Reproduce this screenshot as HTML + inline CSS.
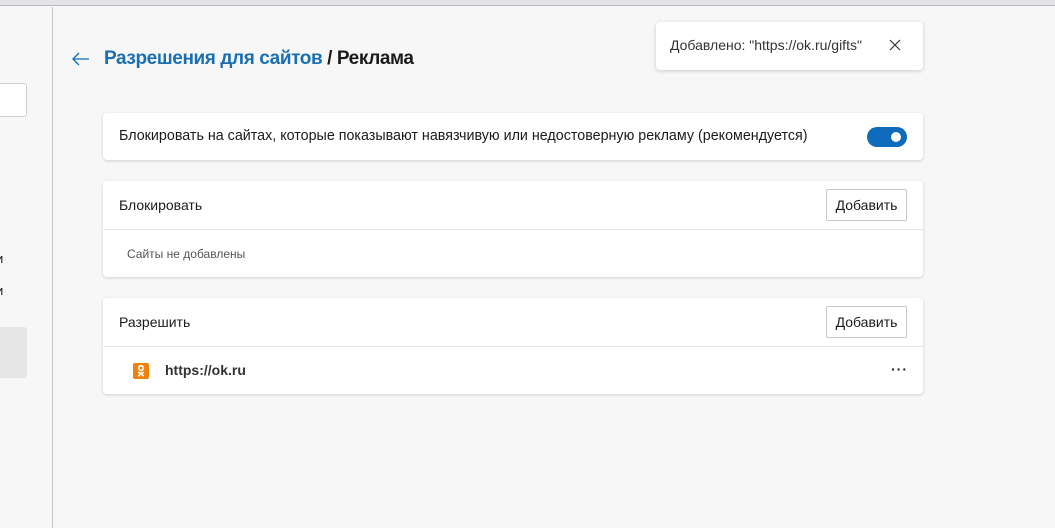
<!DOCTYPE html>
<html><head><meta charset="utf-8"><style>
*{margin:0;padding:0;box-sizing:border-box}
body{width:1055px;height:528px;overflow:hidden;background:#f7f7f7;font-family:"Segoe UI","Liberation Sans","DejaVu Sans",sans-serif;color:#1b1b1b;position:relative}
.top{position:absolute;left:0;top:0;width:1055px;height:6px;background:#e4e4e7;border-bottom:1px solid #b9b9bd}
.side{position:absolute;left:52px;top:7px;width:1px;height:521px;background:#c9c9c9}
.abs{position:absolute}
.card{position:absolute;left:103px;width:820px;background:#fff;border-radius:4px;box-shadow:0 1px 3px rgba(0,0,0,.16)}
.btn{position:absolute;right:16px;width:81px;height:32px;border:1px solid #c8c8c8;border-radius:2px;font-size:14px;text-align:center;line-height:30px;background:#fff}
</style></head><body>
<div class="top"></div>
<div class="side"></div>
<div class="abs" style="left:0;top:83px;width:27px;height:34px;background:#fff;border:1px solid #cfcfcf;border-left:none;border-radius:0 3px 3px 0"></div>
<div class="abs" style="left:-4px;top:251px;font-size:13px">и</div>
<div class="abs" style="left:-4px;top:283px;font-size:13px">и</div>
<div class="abs" style="left:0;top:327px;width:27px;height:51px;background:#e6e6e6;border-radius:0 3px 3px 0"></div>

<svg class="abs" style="left:71px;top:51px" width="20" height="16" viewBox="0 0 20 16"><path d="M18 8H2M8 2L2 8l6 6" fill="none" stroke="#0f6cbd" stroke-width="1.3"/></svg>
<div class="abs" style="left:104px;top:48px;font-size:19px;font-weight:600;letter-spacing:-0.4px;white-space:nowrap"><span style="color:#1a6fb3">Разрешения для сайтов</span> / Реклама</div>

<div class="abs" style="left:656px;top:22px;width:267px;height:48px;background:#fff;border-radius:4px;box-shadow:0 1px 4px rgba(0,0,0,.18);font-size:14px;color:#333;padding:15px 0 0 14px;white-space:nowrap">Добавлено: "https://ok.ru/gifts"
<svg class="abs" style="left:233px;top:17px" width="12" height="12" viewBox="0 0 12 12"><path d="M1 1l10 10M11 1L1 11" stroke="#333" stroke-width="1.2"/></svg></div>

<div class="card" style="top:113px;height:47px">
<div class="abs" style="left:16px;top:15px;font-size:14.3px;white-space:nowrap">Блокировать на сайтах, которые показывают навязчивую или недостоверную рекламу (рекомендуется)</div>
<div class="abs" style="left:764px;top:14px;width:40px;height:20px;border-radius:10px;background:#0f6cbd"><div class="abs" style="left:24px;top:5px;width:10px;height:10px;border-radius:5px;background:#fff"></div></div>
</div>

<div class="card" style="top:181px;height:96px">
<div class="abs" style="left:16px;top:16px;font-size:14px">Блокировать</div>
<div class="btn" style="top:8px">Добавить</div>
<div class="abs" style="left:0;top:48px;width:820px;height:1px;background:#e6e6e6"></div>
<div class="abs" style="left:24px;top:66px;font-size:12px;color:#555">Сайты не добавлены</div>
</div>

<div class="card" style="top:298px;height:96px">
<div class="abs" style="left:16px;top:16px;font-size:14px">Разрешить</div>
<div class="btn" style="top:8px">Добавить</div>
<div class="abs" style="left:0;top:48px;width:820px;height:1px;background:#e6e6e6"></div>
<svg class="abs" style="left:30px;top:65px" width="16" height="16" viewBox="0 0 16 16"><rect width="16" height="16" rx="2" fill="#ee8208"/><circle cx="8" cy="5" r="2.3" fill="none" stroke="#fff" stroke-width="1.6"/><path d="M5 9.2q3 1.6 6 0M8 10l-2.5 3.2M8 10l2.5 3.2" fill="none" stroke="#fff" stroke-width="1.6"/></svg>
<div class="abs" style="left:62px;top:64px;font-size:14px;font-weight:600;color:#333">https://ok.ru</div>
<div class="abs" style="left:788px;top:63px;font-size:14px;font-weight:700;letter-spacing:1px">···</div>
</div>
</body></html>
